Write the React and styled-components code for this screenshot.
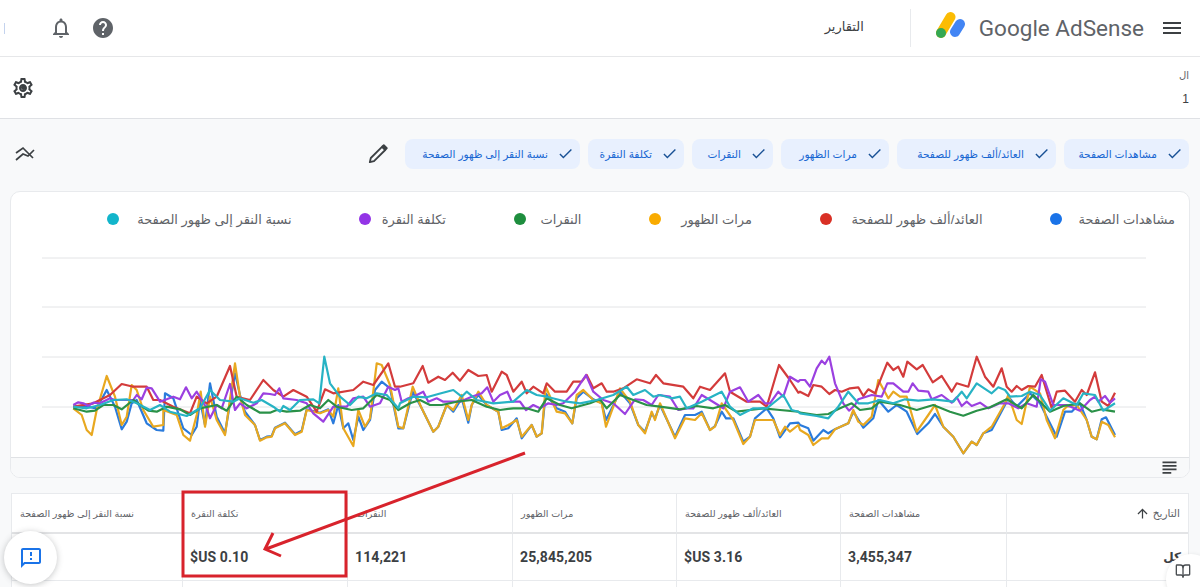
// 애드센스 보고서 화면
import React from 'react';
import styled, { createGlobalStyle } from 'styled-components';
import { MdNotificationsNone, MdHelp, MdMenu, MdOutlineSettings, MdCheck, MdArrowUpward, MdSubject, MdOutlineFeedback } from 'react-icons/md';
import { BookOpen } from 'lucide-react';

const GlobalStyle = createGlobalStyle`
  html, body {
    margin: 0;
    height: 587px;
    overflow: hidden;
    background: #fff;
  }
  * { box-sizing: border-box; }
`;

const FONT = `"Liberation Sans", "Noto Sans", "DejaVu Sans", sans-serif`;

const Page = styled.div`
  position: relative;
  width: 1200px;
  height: 587px;
  overflow: hidden;
  font-family: ${FONT};
  color: #3c4043;
  background: #f8f9fa;
`;

const Header = styled.header`
  display: flex;
  align-items: center;
  height: 57px;
  padding: 0 16px 0 0;
  background: #fff;
  border-bottom: 1px solid #e6e7e9;
`;

const MenuButton = styled.div`
  display: flex;
  color: #3c4043;
  margin-left: 16px;
`;

const LogoText = styled.span`
  font-family: Roboto, ${FONT};
  font-size: 22.5px;
  color: #5f6368;
  white-space: nowrap;
  direction: ltr;
`;

const LogoMarkBox = styled.div`
  display: flex;
  margin: 0 13px 6px 0;
`;

const Divider = styled.div`
  width: 1px;
  height: 38px;
  background: #e8eaed;
  margin: 0 25px 0 0;
`;

const Title = styled.div`
  font-size: 13px;
  color: #3c4043;
  margin-right: 46px;
  margin-bottom: 4px;
`;

const HeaderActions = styled.div`
  display: flex;
  align-items: center;
  gap: 18px;
  margin-right: auto;
  padding-left: 4px;
  color: #5f6368;
`;

const EdgeMark = styled.span`
  width: 1px;
  height: 11px;
  margin-right: 26px;
  background: #c4d3ee;
`;

const AccountRow = styled.div`
  display: flex;
  justify-content: space-between;
  align-items: center;
  height: 62px;
  padding: 0 11px 0 11px;
  background: #fff;
  border-bottom: 1px solid #dfe1e5;
`;

const AccountInfo = styled.div`
  display: flex;
  flex-direction: column;
  gap: 11px;
  font-size: 10px;
  color: #5f6368;
  line-height: 12px;
`;

const AccountValue = styled.span`
  font-size: 12px;
  color: #3c4043;
`;

const GearBox = styled.div`
  position: relative;
  display: flex;
  color: #3c4043;

  &::after {
    content: '';
    position: absolute;
    top: 9.5px;
    left: 9.5px;
    width: 5px;
    height: 5px;
    border-radius: 50%;
    background: #3c4043;
  }
`;

const FilterRow = styled.div`
  display: flex;
  align-items: center;
  height: 72px;
  padding: 0 11px 3px 15px;
  gap: 8px;
`;

const Chip = styled.div`
  display: flex;
  align-items: center;
  gap: 9px;
  width: ${(p) => p.$width}px;
  height: 30px;
  padding: 0 6px 0 0;
  border-radius: 8px;
  background: #e8f0fe;
  color: #1967d2;
  font-size: 10.6px;
  white-space: nowrap;
  svg { color: #1a5296; flex: none; }
`;

const PencilButton = styled.div`
  display: flex;
  color: #3c4043;
  margin-right: 9px;
`;

const TrendButton = styled.div`
  display: flex;
  margin-right: auto;
  color: #3c4043;
`;

const ChartCard = styled.section`
  margin: 0 10px;
  height: 287px;
  background: #fff;
  border: 1px solid #e8eaed;
  border-radius: 10px;
  overflow: hidden;
  display: flex;
  flex-direction: column;
`;

const Legend = styled.div`
  display: flex;
  align-items: center;
  flex: none;
  gap: 67.5px;
  height: 54px;
  padding: 0 14px 0 0;
`;

const LegendItem = styled.div`
  display: flex;
  align-items: center;
  justify-content: space-between;
  width: ${(p) => p.$width}px;
  font-size: 13px;
  color: #5f6368;
  white-space: nowrap;
`;

const Dot = styled.span`
  width: 12px;
  height: 12px;
  border-radius: 50%;
  background: ${(p) => p.$color};
  flex: none;
`;

const ChartSvg = styled.svg`
  display: block;
  width: 1178px;
  height: 211px;
  flex: none;
`;

const ChartFooter = styled.div`
  display: flex;
  align-items: center;
  flex: none;
  height: 20px;
  padding-right: 9px;
  background: #f8f9fa;
  border-top: 1px solid #e0e2e5;
  color: #3c4043;
  svg { flex: none; }
`;

const Table = styled.div`
  display: grid;
  grid-template-columns: 182px 166px 164px 164px 165px 165px 171px;
  grid-template-rows: 40px 47px 20px;
  margin: 15px 11px 0 11px;
  width: 1178px;
  background: #fff;
  border-top: 1px solid #e8eaed;
  border-right: 1px solid #e8eaed;
`;

const HeadCell = styled.div`
  display: flex;
  align-items: center;
  justify-content: ${(p) => (p.$date ? 'flex-start' : 'flex-end')};
  gap: 3px;
  padding: 0 8px;
  font-size: ${(p) => (p.$date ? 10.5 : 9.6)}px;
  color: #5f6368;
  white-space: nowrap;
  border-left: 1px solid #e8eaed;
  border-bottom: 2px solid #e3e4e6;
  svg { color: #3c4043; }
`;

const ValueCell = styled.div`
  display: flex;
  align-items: center;
  justify-content: flex-start;
  padding: 0 7px;
  font-family: Roboto, ${FONT};
  font-size: ${(p) => (p.$date ? 12 : 14)}px;
  font-weight: 700;
  letter-spacing: 0.1px;
  color: #3c4043;
  border-left: 1px solid #e8eaed;
  border-bottom: 1px solid #e8eaed;
`;

const BlankCell = styled.div`
  border-left: 1px solid #e8eaed;
`;

const Annotation = styled.svg`
  position: absolute;
  top: 0;
  left: 0;
  width: 1200px;
  height: 587px;
  pointer-events: none;
`;

const FeedbackFab = styled.div`
  position: absolute;
  left: 4px;
  top: 531px;
  width: 53px;
  height: 53px;
  display: flex;
  align-items: center;
  justify-content: center;
  border-radius: 50%;
  background: #fff;
  color: #1a73e8;
  box-shadow: 0 1px 6px rgba(60, 64, 67, 0.3);
`;

const GuideFab = styled.div`
  position: absolute;
  left: 1166px;
  top: 554px;
  width: 50px;
  height: 50px;
  display: flex;
  direction: ltr;
  padding: 9px 0 0 9px;
  border-radius: 50%;
  background: #fff;
  color: #4a4e52;
  box-shadow: 0 1px 4px rgba(60, 64, 67, 0.15);
`;

const METRICS = [
  { label: 'مشاهدات الصفحة', chip: 125, legend: 125, color: '#1a73e8' },
  { label: 'العائد/ألف ظهور للصفحة', chip: 159, legend: 163, color: '#d93025' },
  { label: 'مرات الظهور', chip: 108, legend: 103, color: '#f9ab00' },
  { label: 'النقرات', chip: 81, legend: 68, color: '#1e8e3e' },
  { label: 'تكلفة النقرة', chip: 96, legend: 87, color: '#9334e6' },
  { label: 'نسبة النقر إلى ظهور الصفحة', chip: 175, legend: 185, color: '#12b5cb' },
];

const COLUMNS = [
  { head: 'مشاهدات الصفحة', value: '3,455,347' },
  { head: 'العائد/ألف ظهور للصفحة', value: '$US 3.16' },
  { head: 'مرات الظهور', value: '25,845,205' },
  { head: 'النقرات', value: '114,221' },
  { head: 'تكلفة النقرة', value: '$US 0.10' },
  { head: 'نسبة النقر إلى ظهور الصفحة', value: '' },
];

// 각 구간: [x 오프셋, x, y, x, y ...] (y는 340 기준 3배 값)
const LINES = [
  {
    color: '#2a7bdc',
    parts: [
      [0, 220,200,260,200,290,205,320,150,345,200,365,268,380,245,395,190,410,180,440,250,470,270,490,272,495,160,520,175,550,265,575,285,590,260,600,180,615,255,630,130,650,230,675,280,705,100,720,165,735,215,765,255,780,300,800,290,815,288,825,263,855,248,885,283,905,272,920,208,960,218,985,208,1000,250,1015,195,1030,265,1045,250,1060,300,1075,230,1090,270,1110,240,1125,150,1145,125,1170,145,1195,265],
      [400, 10,265,38,155,65,205,100,275,115,260,140,195,160,215,185,175,205,248,215,195,235,165,260,195,295,215,305,270,325,265,350,235,365,295,395,255,410,290,425,280,437,160,470,205,495,215,517,250,530,175,550,155,580,178,605,190,618,240,660,155,690,190,715,255,735,275,755,220,765,235,780,195,825,290,855,225,885,225,905,215,930,270,945,258,965,215,978,235,1000,235,1030,305,1050,290,1065,235,1100,205,1120,235,1140,292,1170,250,1195,248],
      [800, 0,255,25,265,40,302,70,270,85,280,105,268,145,250,160,215,190,263,220,235,235,180,265,215,290,195,320,215,352,282,385,250,405,222,430,260,460,290,490,340,515,305,530,315,550,280,575,270,615,195,625,170,650,200,690,160,720,190,740,230,770,290,795,215,815,215,840,190,860,240,875,290,890,298,905,238,918,232,945,285],
    ],
  },
  {
    color: '#e8a820',
    parts: [
      [0, 220,205,245,225,260,270,275,285,290,210,320,108,345,170,365,255,380,230,395,135,410,150,430,210,460,260,490,255,490,210,530,225,550,285,570,302,590,225,602,155,615,260,630,170,650,240,675,285,705,70,720,170,735,225,765,255,780,302,800,292,815,290,825,265,855,250,885,285,905,275,920,210,960,220,985,210,1000,230,1015,145,1030,265,1060,318,1075,210,1095,260,1110,235,1130,70,1145,75,1170,135,1195,260],
      [400, 10,265,38,140,65,205,100,275,115,260,140,195,160,210,185,165,205,240,215,195,235,155,260,195,295,215,305,265,325,255,350,240,365,290,395,255,410,290,425,280,437,140,470,215,495,220,517,250,530,165,550,150,580,180,605,190,618,260,660,145,690,185,715,255,735,280,755,215,765,240,780,190,825,295,855,235,885,240,905,220,930,270,945,260,965,190,1000,240,1030,312,1050,290,1065,240,1120,240,1140,285,1155,260,1170,275,1195,255],
      [800, 0,270,25,285,40,315,65,295,85,295,105,268,145,250,160,210,175,245,190,255,215,230,235,120,265,175,280,155,300,170,320,170,350,275,385,225,405,195,430,260,460,290,490,340,515,305,530,315,550,280,575,260,615,190,625,165,650,240,665,252,690,140,720,160,740,240,765,295,790,210,800,200,830,195,860,240,875,290,890,298,905,245,925,255,945,292],
    ],
  },
  {
    color: '#d33b3b',
    parts: [
      [0, 220,200,280,190,330,165,365,132,400,140,440,140,460,180,480,180,520,200,570,220,590,170,620,190,650,170,690,78,710,170,750,180,790,120,820,150,850,170,880,150,920,170,950,215,975,148,1000,160,1060,150,1090,125,1120,135,1165,70,1185,140],
      [400, 0,140,40,130,68,78,85,128,115,110,135,120,158,98,180,122,205,90,235,108,260,105,275,155,305,95,320,105,340,155,365,125,380,160,400,140,430,160,440,130,465,155,500,155,520,125,545,125,560,105,580,145,605,130,620,155,640,155,670,145,710,118,750,130,768,105,790,130,850,140,880,175,900,140,930,150,975,100,990,155,1040,185,1080,185,1100,200,1137,75,1170,120,1195,158],
      [800, 0,155,25,168,40,135,65,140,88,162,105,150,125,155,150,145,175,142,190,168,205,148,225,160,262,68,280,90,295,80,310,110,322,65,350,88,368,75,398,127,425,108,455,155,470,130,505,140,530,50,555,110,580,140,605,85,620,140,635,155,650,138,665,150,685,138,705,140,725,105,755,205,770,155,795,152,825,185,845,150,860,165,885,97,905,185,925,198,945,158],
    ],
  },
  {
    color: '#9b40e0',
    parts: [
      [0, 220,195,235,187,250,190,265,197,280,188,300,190,330,175,345,180,400,180,410,165,425,178,440,143,455,145,480,185,500,178,520,170,540,178,558,142,575,175,590,155,620,205,630,235,650,195,665,205,690,132,705,210,720,190,740,205,770,190,790,160,810,162,825,165,838,145,850,175,890,180,920,190,940,220,970,245,1000,200,1040,200,1060,175,1090,170,1110,200,1140,190,1165,140,1185,150,1195,145],
      [400, 5,185,25,175,40,170,70,155,85,185,110,175,130,185,180,185,215,170,245,160,262,142,280,185,300,165,322,155,335,185,360,185,378,210,400,195,420,205,445,190,470,195,490,190,525,155,558,105,580,155,610,180,640,190,675,222,705,178,730,180,755,195,775,165,810,170,835,210,860,205,880,205,905,165,930,180,970,205,990,155,1020,142,1045,185,1075,165,1095,190,1110,190,1135,155,1150,170,1170,110,1195,125],
      [800, 0,120,15,120,30,140,50,85,65,62,75,72,88,50,105,130,130,190,147,212,165,195,175,178,215,165,245,170,262,130,280,130,310,155,325,155,338,130,355,152,385,155,395,178,425,165,455,188,470,172,485,198,500,185,515,198,540,188,565,205,600,190,625,190,655,205,680,190,710,200,722,118,735,125,760,195,800,195,840,212,870,180,885,170,895,185,915,168,930,188,945,175],
    ],
  },
  {
    color: '#2a9148',
    parts: [
      [0, 220,205,240,210,260,215,285,212,310,195,340,195,365,208,400,180,420,195,445,212,470,215,500,200,540,208,570,225,600,205,650,195,680,212,710,170,740,195,780,218,810,218,830,210,860,215,900,212,930,195,960,205,985,180,1010,200,1055,210,1090,205,1130,165,1170,180,1195,210],
      [400, 30,190,60,180,90,195,125,195,170,185,215,180,260,200,300,210,340,205,380,205,415,215,440,175,480,195,515,205,570,190,600,178,620,205,660,165,700,180,740,195,780,200,840,208,890,198,940,205,975,195,1010,215,1050,210,1090,205,1140,210,1195,215],
      [800, 0,218,50,225,85,222,120,205,155,190,180,210,215,205,240,185,300,195,350,210,400,195,450,215,490,227,530,212,570,202,620,178,665,205,700,165,750,215,790,198,840,190,875,215,905,208,945,215],
    ],
  },
  {
    color: '#27b3c4',
    parts: [
      [0, 220,200,260,205,300,195,340,180,380,178,410,190,450,210,480,195,510,215,560,228,600,205,630,150,660,180,700,185,720,175,760,188,785,180,820,200,840,215,850,198,870,210,900,180,940,178,958,190,973,50,990,130,1020,170,1050,195,1075,170,1100,175,1130,160,1160,165,1195,205],
      [400, 0,190,40,170,80,172,115,162,160,150,185,170,200,155,230,180,280,190,340,185,380,150,410,165,440,170,500,185,540,190,590,180,640,165,680,140,700,165,735,150,760,170,780,165,815,175,840,170,860,205,905,185,965,155,990,200,1020,225,1060,205,1100,205,1150,165,1175,210,1195,215],
      [800, 0,220,50,228,85,235,115,200,145,155,175,190,205,190,240,180,280,190,315,178,355,182,400,178,460,185,485,155,500,175,530,130,575,160,595,142,615,150,630,170,665,168,690,155,720,165,750,212,790,175,830,195,850,160,885,165,910,212,945,190],
    ],
  },
];

const linePoints = (parts) =>
  parts
    .flatMap(([offset, ...vals]) => {
      const out = [];
      for (let i = 0; i < vals.length; i += 2) {
        out.push(`${(offset + vals[i] / 3).toFixed(1)},${(340 + vals[i + 1] / 3).toFixed(1)}`);
      }
      return out;
    })
    .join(' ');

function LogoMark() {
  return (
    <svg width="30" height="28" viewBox="0 0 30 28">
      <line x1="14.5" y1="6" x2="5" y2="22" stroke="#fbbc04" strokeWidth="10" strokeLinecap="round" />
      <circle cx="5" cy="22" r="5" fill="#34a853" />
      <line x1="24" y1="13" x2="19" y2="21" stroke="#4285f4" strokeWidth="10" strokeLinecap="round" />
    </svg>
  );
}

function PencilIcon() {
  return (
    <svg width="20" height="20" viewBox="0 0 20 20" fill="none" stroke="currentColor" strokeWidth="1.8" strokeLinejoin="round">
      <path d="M1.8 18.2 L2.8 14 L14 2.8 L17.2 6 L6 17.2 Z" />
      <path d="M14.5 2.3 L15.8 1.2 L18.8 4.2 L17.7 5.5 Z" fill="currentColor" />
    </svg>
  );
}

function TrendIcon() {
  return (
    <svg width="20" height="16" viewBox="0 0 20 16" fill="none" stroke="currentColor" strokeWidth="1.7">
      <polyline points="1,7 8,2 18,12" />
      <polyline points="1,14 8,8 13,10 19,4" />
    </svg>
  );
}

function App() {
  return (
    <>
      <GlobalStyle />
      <Page dir="rtl">
        <Header>
          <MenuButton><MdMenu size={24} /></MenuButton>
          <LogoText>Google AdSense</LogoText>
          <LogoMarkBox><LogoMark /></LogoMarkBox>
          <Divider />
          <Title>التقارير</Title>
          <HeaderActions>
            <MdHelp size={24} />
            <MdNotificationsNone size={24} />
            <EdgeMark />
          </HeaderActions>
        </Header>

        <AccountRow>
          <AccountInfo>
            <span>ال</span>
            <AccountValue>1</AccountValue>
          </AccountInfo>
          <GearBox><MdOutlineSettings size={24} /></GearBox>
        </AccountRow>

        <FilterRow>
          {METRICS.map((m) => (
            <Chip key={m.label} $width={m.chip}>
              <MdCheck size={17} />
              <span>{m.label}</span>
            </Chip>
          ))}
          <PencilButton><PencilIcon /></PencilButton>
          <TrendButton><TrendIcon /></TrendButton>
        </FilterRow>

        <ChartCard>
          <Legend>
            {METRICS.map((m) => (
              <LegendItem key={m.label} $width={m.legend}>
                <span>{m.label}</span>
                <Dot $color={m.color} />
              </LegendItem>
            ))}
          </Legend>
          <ChartSvg viewBox="11 246 1178 211">
            {[258, 307, 357, 407].map((y) => (
              <line key={y} x1="42" x2="1146" y1={y} y2={y} stroke="#e3e4e6" strokeWidth="1" />
            ))}
            {LINES.map((l) => (
              <polyline key={l.color} points={linePoints(l.parts)} fill="none" stroke={l.color} strokeWidth="2.2" strokeLinejoin="round" />
            ))}
          </ChartSvg>
          <ChartFooter><MdSubject size={21} /></ChartFooter>
        </ChartCard>

        <Table>
          <HeadCell $date>
            <span>التاريخ</span>
            <MdArrowUpward size={15} />
          </HeadCell>
          {COLUMNS.map((c) => (
            <HeadCell key={c.head}>{c.head}</HeadCell>
          ))}
          <ValueCell $date>كل</ValueCell>
          {COLUMNS.map((c) => (
            <ValueCell key={c.head} dir="ltr">{c.value}</ValueCell>
          ))}
          {[0, 1, 2, 3, 4, 5, 6].map((i) => <BlankCell key={i} />)}
        </Table>

        <Annotation viewBox="0 0 1200 587">
          <rect x="183" y="492" width="163" height="84" fill="none" stroke="#d8232c" strokeWidth="3" />
          <line x1="525" y1="453" x2="266" y2="549" stroke="#d8232c" strokeWidth="3" />
          <polyline points="273,533 265,549 281,556" fill="none" stroke="#d8232c" strokeWidth="3" />
        </Annotation>

        <FeedbackFab><MdOutlineFeedback size={24} /></FeedbackFab>
        <GuideFab><BookOpen size={16} /></GuideFab>
      </Page>
    </>
  );
}

export default App;
